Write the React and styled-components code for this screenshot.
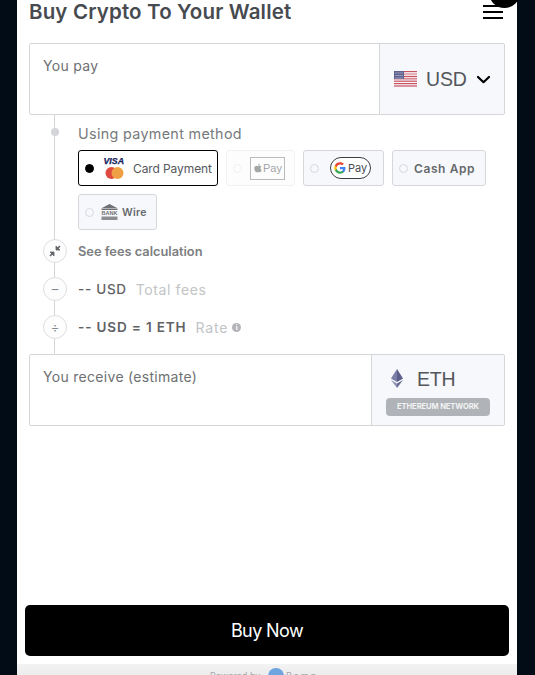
import React from 'react';
import styled, { createGlobalStyle } from 'styled-components';
import { FaApple } from 'react-icons/fa';

const Global = createGlobalStyle`
  html, body {
    margin: 0;
    height: 675px;
    overflow: hidden;
    background: #020c16;
    font-family: Inter, "Open Sans", sans-serif;
  }
`;

const Panel = styled.div`
  position: relative;
  box-sizing: border-box;
  width: 500px;
  height: 675px;
  margin-left: 17px;
  background: #fff;
  display: flex;
  flex-direction: column;
`;

const Header = styled.div`
  display: flex;
  justify-content: space-between;
  align-items: center;
  height: 24px;
  padding: 0 14px 0 12px;
  margin-bottom: 19px;
`;

const Title = styled.h1`
  margin: 0;
  font-size: 20.5px;
  font-weight: 600;
  line-height: 24px;
  letter-spacing: 0.15px;
  color: #474b50;
`;

const Burger = styled.div`
  width: 20px;
  display: flex;
  flex-direction: column;
  gap: 4px;
  span {
    display: block;
    height: 2px;
    background: #000;
  }
`;

const CloseDot = styled.div`
  position: absolute;
  top: -23px;
  right: -3px;
  width: 31px;
  height: 31px;
  border-radius: 50%;
  background: #000;
`;

const Content = styled.div`
  padding: 0 12px;
  display: flex;
  flex-direction: column;
`;

const Field = styled.div`
  box-sizing: border-box;
  height: 72px;
  display: flex;
  border: 1px solid #d5d6d8;
  border-radius: 2px;
  background: #fff;
`;

const FieldLabel = styled.div`
  flex: 1;
  padding: 13px 13px;
  font-size: 14px;
  line-height: 17px;
  letter-spacing: 0.3px;
  color: #6d7073;
`;

const Picker = styled.div`
  box-sizing: border-box;
  width: ${p => p.$width}px;
  background: #f7f8fc;
  border-left: 1px solid #d5d6d8;
  display: flex;
  flex-direction: column;
  justify-content: center;
`;

const PickerRow = styled.div`
  display: flex;
  align-items: center;
  gap: ${p => p.$gap}px;
  padding-left: ${p => p.$left}px;
  padding-top: ${p => p.$top || 0}px;
`;

const Code = styled.span`
  font-family: "Liberation Sans", Arial, sans-serif;
  font-size: 19.5px;
  line-height: 24px;
  letter-spacing: -0.2px;
  color: #54575b;
`;

const Network = styled.div`
  margin: 7px 14px 0;
  height: 18px;
  border-radius: 4px;
  background: #b0b3b7;
  color: #f2f3f4;
  font-size: 7.6px;
  font-weight: 700;
  line-height: 18px;
  letter-spacing: -0.1px;
  text-align: center;
  white-space: nowrap;
`;

const Steps = styled.div`
  position: relative;
  height: 239px;
  padding-left: 49px;
  box-sizing: border-box;
  display: flex;
  flex-direction: column;
  &::before {
    content: '';
    position: absolute;
    left: 25px;
    top: 0;
    bottom: 0;
    width: 1px;
    background: #d5d6d8;
  }
`;

const MethodHead = styled.div`
  position: relative;
  margin-top: 9px;
  font-size: 14.3px;
  line-height: 19px;
  letter-spacing: 0.35px;
  color: #77797c;
  &::before {
    content: '';
    position: absolute;
    left: -27px;
    top: 4px;
    width: 8px;
    height: 8px;
    border-radius: 50%;
    background: #d3d5d8;
  }
`;

const Methods = styled.div`
  display: flex;
  flex-wrap: wrap;
  gap: 8px;
  margin-top: 7px;
  margin-bottom: 2px;
  width: 420px;
`;

const Method = styled.div`
  box-sizing: border-box;
  height: 36px;
  width: ${p => p.$width}px;
  padding-left: 6px;
  display: flex;
  align-items: center;
  gap: ${p => p.$gap}px;
  border-radius: 3px;
  background: ${p => (p.$active ? '#fff' : p.$faded ? '#fdfdfe' : '#f7f8fc')};
  border: 1px solid ${p => (p.$active ? '#000' : p.$faded ? '#f1f2f4' : '#d5d7db')};
`;

const Radio = styled.span`
  flex: none;
  box-sizing: border-box;
  width: 9px;
  height: 9px;
  border-radius: 50%;
  background: ${p => (p.$on ? '#000' : 'transparent')};
  border: 1px solid ${p => (p.$on ? '#000' : p.$faded ? '#f0f1f3' : '#d5d8de')};
`;

const MethodText = styled.span`
  margin-left: ${p => p.$shift || 0}px;
  font-size: ${p => p.$size}px;
  font-weight: ${p => p.$weight};
  letter-spacing: ${p => p.$spacing}px;
  color: ${p => p.$color};
  white-space: nowrap;
`;

const Apple = styled.span`
  box-sizing: border-box;
  width: 35px;
  height: 23px;
  border: 1px solid #b9babb;
  display: flex;
  align-items: center;
  justify-content: center;
  font-family: "Liberation Sans", sans-serif;
  font-size: 11px;
  color: #a3a5a7;
`;

const GPay = styled.span`
  box-sizing: border-box;
  width: 41px;
  height: 22px;
  border: 1px solid #3c4043;
  border-radius: 11px;
  background: #fff;
  display: flex;
  align-items: center;
  justify-content: center;
  gap: 2px;
  font-size: 11px;
  color: #4a4d50;
`;

const Row = styled.div`
  position: relative;
  height: 38px;
  display: flex;
  align-items: center;
  gap: ${p => p.$gap || 0}px;
  white-space: nowrap;
`;

const Bubble = styled.span`
  position: absolute;
  z-index: 1;
  left: -35px;
  top: 7px;
  box-sizing: border-box;
  width: 24px;
  height: 24px;
  border-radius: 50%;
  background: #fdfdfe;
  border: 1px solid #dcdee2;
  display: flex;
  align-items: center;
  justify-content: center;
  color: #85888b;
  font-size: 13px;
  line-height: 1;
`;

const Strong = styled.span`
  font-size: ${p => p.$size || 13.5}px;
  font-weight: ${p => p.$weight || 600};
  letter-spacing: ${p => p.$spacing ?? 0.3}px;
  color: ${p => p.$color || '#5f6265'};
`;

const Muted = styled.span`
  font-size: 14px;
  letter-spacing: ${p => p.$spacing || 0.6}px;
  color: #c2c4c6;
`;

const InfoDot = styled.span`
  width: 9px;
  height: 9px;
  margin-left: -5px;
  border-radius: 50%;
  background: #b3b5b8;
  color: #fff;
  font-size: 7px;
  font-weight: 700;
  line-height: 9px;
  text-align: center;
`;

const Spacer = styled.div`
  flex: 1;
`;

const BuyButton = styled.button`
  display: block;
  box-sizing: border-box;
  flex: none;
  width: 484px;
  height: 51px;
  margin: 0 8px 8px;
  border: 0;
  border-radius: 5px;
  background: #000;
  color: #fff;
  font-family: Inter, sans-serif;
  font-size: 18px;
  font-weight: 400;
  letter-spacing: -0.6px;
`;

const Footer = styled.div`
  box-sizing: border-box;
  flex: none;
  height: 11px;
  background: linear-gradient(#f3f3f4, #ececed);
  display: flex;
  gap: 8px;
  overflow: hidden;
  padding: 4px 0 0 193px;
  font-size: 9px;
  line-height: 12px;
  color: #a3a6a9;
`;

const FooterText = styled.span`
  padding-top: 2px;
  width: ${p => p.$width}px;
  white-space: nowrap;
  margin-left: ${p => p.$shift || 0}px;
  letter-spacing: ${p => p.$spacing || 0}px;
`;

const FooterLogo = styled.span`
  flex: none;
  width: 16px;
  height: 16px;
  border-radius: 50%;
  background: #6ea4e0;
`;

const Flag = () => (
  <svg width="23" height="16" viewBox="0 0 23 16">
    {[0, 1, 2, 3, 4, 5, 6].map(i => (
      <rect key={i} y={i * 2.4} width="23" height="1.2" fill="#c8525f" />
    ))}
    <rect y="1.2" width="23" height="1.2" fill="#f3dfe1" />
    <rect y="3.6" width="23" height="1.2" fill="#f3dfe1" />
    <rect y="6" width="23" height="1.2" fill="#f3dfe1" />
    <rect width="10" height="8" fill="#5d5f8e" />
    {[1.5, 3.5, 5.5, 7.5].map(x =>
      [1.5, 4, 6.5].map(y => <rect key={`${x}-${y}`} x={x} y={y} width="1" height="1" fill="#d8d9e6" />)
    )}
  </svg>
);

const Chevron = () => (
  <svg width="15" height="15" viewBox="0 0 15 15" fill="none" stroke="#000" strokeWidth="2.2" strokeLinecap="round" strokeLinejoin="round">
    <path d="M2 5l5.5 5.2L13 5" />
  </svg>
);

const VisaMaster = () => (
  <svg width="22" height="26" viewBox="0 0 22 26">
    <text x="0.5" y="9" fontFamily="Liberation Sans, sans-serif" fontSize="8.8" fontWeight="700" fontStyle="italic" fill="#16225c" stroke="#16225c" strokeWidth="0.25">VISA</text>
    <circle cx="8.5" cy="18" r="6" fill="#de4a3f" />
    <circle cx="14.5" cy="18" r="6" fill="#f0a044" />
  </svg>
);

const Bank = () => (
  <svg width="17" height="16" viewBox="0 0 17 16">
    <path d="M8.5 0L17 4.5H0z" fill="#6f7174" />
    <rect x="0.5" y="5" width="16" height="1" fill="#6f7174" />
    <text x="8.5" y="11" textAnchor="middle" fontFamily="Liberation Sans, sans-serif" fontSize="5.5" fontWeight="700" fill="#6f7174">BANK</text>
    <rect x="0.5" y="12.5" width="16" height="3.5" fill="#8b8d90" />
  </svg>
);

const GoogleG = () => (
  <svg width="12" height="12" viewBox="0 0 24 24">
    <path d="M23 12.3c0-.8-.1-1.6-.2-2.3H12v4.4h6.2c-.3 1.4-1.1 2.6-2.3 3.4v2.9h3.7c2.2-2 3.4-5 3.4-8.4z" fill="#4285f4" />
    <path d="M12 23.5c3.1 0 5.7-1 7.6-2.8l-3.7-2.9c-1 .7-2.3 1.1-3.9 1.1-3 0-5.5-2-6.4-4.7H1.8v3c1.9 3.8 5.8 6.3 10.2 6.3z" fill="#34a853" />
    <path d="M5.6 14.2c-.5-1.4-.5-3 0-4.4v-3H1.8c-1.6 3.2-1.6 7.2 0 10.4z" fill="#fbbc04" />
    <path d="M12 5c1.7 0 3.2.6 4.4 1.7l3.3-3.3C17.7 1.6 15.1.5 12 .5 7.6.5 3.7 3 1.8 6.8l3.8 3C6.5 7 9 5 12 5z" fill="#ea4335" />
  </svg>
);

const Collapse = () => (
  <svg width="12" height="12" viewBox="0 0 12 12" fill="#63666a" stroke="#63666a" strokeWidth="0.8">
    <path d="M7 1v4h4zM1 7h4v4z" />
    <path d="M1 11l3-3M11 1L8 4" fill="none" strokeWidth="1.6" />
  </svg>
);

const Eth = () => (
  <svg width="12" height="19" viewBox="0 0 12 19">
    <path d="M6 0L0 9.6 6 13z" fill="#7a7ea6" />
    <path d="M6 0l6 9.6L6 13z" fill="#5a5e88" />
    <path d="M0 11l6 8v-4.6z" fill="#8d91b5" />
    <path d="M12 11l-6 8v-4.6z" fill="#666a90" />
  </svg>
);

const App = () => (
  <>
    <Global />
    <Panel>
      <CloseDot />
      <Header>
        <Title>Buy Crypto To Your Wallet</Title>
        <Burger>
          <span />
          <span />
          <span />
        </Burger>
      </Header>
      <Content>
        <Field>
          <FieldLabel>You pay</FieldLabel>
          <Picker $width={125}>
            <PickerRow $left={14} $gap={9}>
              <Flag />
              <Code>USD</Code>
              <Chevron />
            </PickerRow>
          </Picker>
        </Field>
        <Steps>
          <MethodHead>Using payment method</MethodHead>
          <Methods>
            <Method $active $width={140} $gap={9}>
              <Radio $on />
              <VisaMaster />
              <MethodText $shift={-1} $size={12} $weight={400} $spacing={-0.1} $color="#55585c">Card Payment</MethodText>
            </Method>
            <Method $faded $width={69} $gap={8}>
              <Radio $faded />
              <Apple><FaApple size={10} />Pay</Apple>
            </Method>
            <Method $width={81} $gap={11}>
              <Radio />
              <GPay><GoogleG />Pay</GPay>
            </Method>
            <Method $width={94} $gap={6}>
              <Radio />
              <MethodText $size={12} $weight={600} $spacing={0.6} $color="#66696c">Cash App</MethodText>
            </Method>
            <Method $width={79} $gap={7}>
              <Radio />
              <Bank />
              <MethodText $shift={-3} $size={10.5} $weight={600} $spacing={0.3} $color="#66696c">Wire</MethodText>
            </Method>
          </Methods>
          <Row>
            <Bubble><Collapse /></Bubble>
            <Strong $size={12.8} $spacing={0} $color="#7c7e81">See fees calculation</Strong>
          </Row>
          <Row $gap={9}>
            <Bubble>–</Bubble>
            <Strong $weight={500} $spacing={0.7}>-- USD</Strong>
            <Muted>Total fees</Muted>
          </Row>
          <Row $gap={9}>
            <Bubble>÷</Bubble>
            <Strong $spacing={0.85}>-- USD = 1 ETH</Strong>
            <Muted $spacing={0.8}>Rate</Muted>
            <InfoDot>i</InfoDot>
          </Row>
        </Steps>
        <Field>
          <FieldLabel>You receive (estimate)</FieldLabel>
          <Picker $width={133}>
            <PickerRow $left={19} $gap={14} $top={2}>
              <Eth />
              <Code>ETH</Code>
            </PickerRow>
            <Network>ETHEREUM NETWORK</Network>
          </Picker>
        </Field>
      </Content>
      <Spacer />
      <BuyButton>Buy Now</BuyButton>
      <Footer>
        <FooterText $width={50}>Powered by</FooterText>
        <FooterLogo />
        <FooterText $shift={-6} $spacing={2}>Ramp</FooterText>
      </Footer>
    </Panel>
  </>
);

export default App;
